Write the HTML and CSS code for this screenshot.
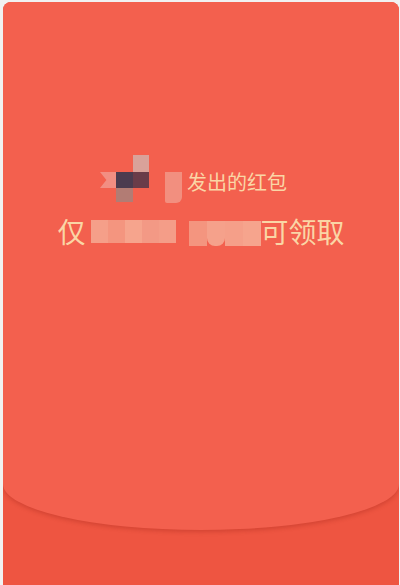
FILE: index.html
```html
<!DOCTYPE html>
<html lang="zh-CN">
<head>
    <meta charset="UTF-8">
    <meta name="viewport" content="width=device-width, initial-scale=1.0">
    <title>红包</title>
    <link rel="stylesheet" href="styles.css">
</head>
<body>
    <div class="packet">
        <div class="flap">
            <div class="sender">
                <div class="avatar">
                    <span></span><span></span><span class="c-pink"></span>
                    <span class="c-ribbon"></span><span class="c-dark"></span><span class="c-dark2"></span>
                    <span></span><span class="c-brown"></span><span></span>
                </div>
                <div class="name-blur"></div>
                <div class="sender-text">发出的红包</div>
            </div>
            <div class="only">
                <span class="big">仅</span>
                <div class="blur-line">
                    <span class="b1"></span><span class="b2"></span><span class="b3"></span><span class="b4"></span><span class="b5"></span>
                </div>
                <div class="blur-line second">
                    <span class="b2"></span><span class="b6"></span><span class="b1"></span><span class="b3"></span>
                </div>
                <span class="big">可领取</span>
            </div>
        </div>
    </div>
</body>
</html>
```

FILE: styles.css
```css
body{
    margin: 0;
    background-color: #f1f1f1;
    font-family: "Noto Sans CJK SC", "Noto Sans", sans-serif;
}
.packet{
    margin: 2px 1px 0 3px;
    height: 583px;
    overflow: hidden;
    background-color: #ee5541;
    border-radius: 8px 8px 0 0;
}
.flap{
    height: 528px;
    background-color: #f3604e;
    border-radius: 0 0 50% 50% / 0 0 46px 46px;
    box-shadow: 0 2px 4px rgba(150, 30, 20, 0.3);
    padding-top: 153px;
    box-sizing: border-box;
}
.sender{
    display: flex;
    align-items: flex-start;
    padding-left: 97px;
}
.avatar{
    display: grid;
    grid-template-columns: 16px 17px 16px;
    grid-template-rows: 17px 16px 14px;
}
.c-pink{background: #d9a29a;}
.c-ribbon{
    background: #f28e82;
    clip-path: polygon(0 0, 100% 0, 100% 100%, 0 100%, 40% 50%);
}
.c-dark{background: #4b3b4f;}
.c-dark2{background: #6a3c49;}
.c-brown{background: #b27c74;}
.name-blur{
    width: 17px;
    height: 31px;
    margin: 17px 0 0 16px;
    background: #f28f7f;
    border-radius: 0 0 6px 2px;
}
.sender-text{
    margin: 15px 0 0 5px;
    font-size: 20px;
    line-height: 24px;
    color: #fad6a6;
}
.only{
    display: flex;
    align-items: center;
    justify-content: center;
    margin-top: 12px;
}
.big{
    font-size: 28px;
    line-height: 32px;
    color: #fad6a6;
}
.blur-line{
    display: flex;
    height: 23px;
    margin-left: 5px;
}
.blur-line span{width: 17px;}
.blur-line.second{
    margin-left: 13px;
    height: 25px;
    margin-top: 4px;
}
.blur-line.second span{width: 18px;}
.b1{background: #f59f89;}
.b2{background: #f4957f;}
.b3{background: #f6a48d;}
.b4{background: #f39985;}
.b5{background: #f49d88;}
.b6{background: #f5a18b; border-radius: 0 0 8px 8px;}
```
